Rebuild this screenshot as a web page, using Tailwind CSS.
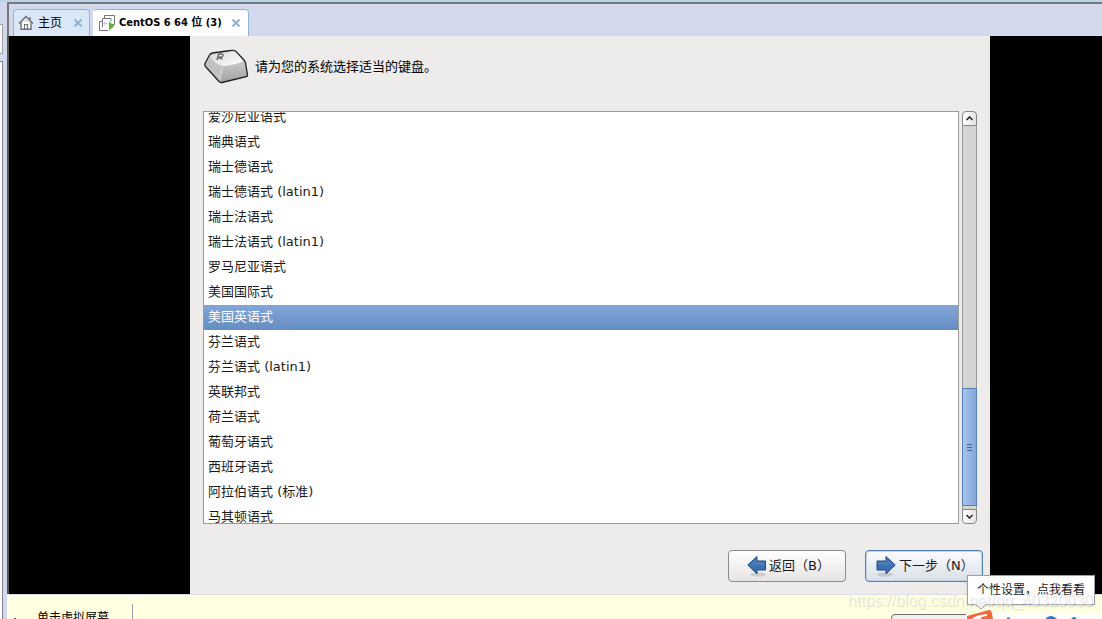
<!DOCTYPE html>
<html lang="zh-CN">
<head>
<meta charset="UTF-8">
<meta name="viewport" content="width=device-width, initial-scale=1.0">
<title>CentOS 6 64 位 (3)</title>
<script src="https://cdn.jsdelivr.net/npm/@tailwindcss/browser@4"></script>
</head>
<body class="relative flex h-screen overflow-hidden bg-[#d3d9ed] font-['DejaVu_Sans','Noto_Sans_CJK_SC',sans-serif] text-[13px] leading-5 text-[#1a1a1a]">

<!-- edge of the collapsed library pane -->
<aside class="flex w-[7px] shrink-0 flex-col border-t-2 border-[#b9d5ec] pt-[22px] pr-1">
  <div class="h-[30px] border border-l-0 border-[#a0a0a8] bg-[#f8f8f8]"></div>
  <div class="mt-[7px] flex-1 border border-b-0 border-l-0 border-[#82828c] bg-white"></div>
</aside>

<div class="flex min-w-0 flex-1 flex-col border-t-2 border-[#b9d5ec]">
  <!-- tab strip -->
  <nav class="flex h-[34px] shrink-0 items-end gap-[3px] border-t-2 border-l-2 border-[#787878] pl-1 font-['DejaVu_Sans_Condensed','Noto_Sans_CJK_SC',sans-serif] text-black">
    <div class="flex h-[27px] w-[77px] items-center rounded-t-sm border border-b-0 border-[#93b4d4] bg-[#dae7f6] pl-1">
      <svg class="size-4 shrink-0" viewBox="0 0 16 16" fill="#fff" stroke="#707070" stroke-width="1.4" aria-hidden="true">
        <path d="M3 7v7.300h10V7"/>
        <path d="M1 8.500 8 1.500l7 7" fill="none"/>
        <path d="M12 2v3" fill="none"/>
        <path d="M6.500 14V9.500h3V14" fill="none" stroke-width="1.200"/>
      </svg>
      <a href="#" class="ml-1 text-xs">主页</a>
      <button aria-label="关闭主页" class="ml-3">
        <svg class="size-2" viewBox="0 0 8 8" stroke="#8fb4d3" stroke-width="2"><path d="m.500.500 7 7m0-7-7 7"/></svg>
      </button>
    </div>
    <div class="flex h-[27px] w-[156px] items-center rounded-t-sm border border-b-0 border-[#93b4d4] border-l-white bg-white pl-[5px]">
      <svg class="size-4 shrink-0" viewBox="0 0 16 16" fill="none" stroke="#777" aria-hidden="true">
        <path d="M5.500 4V.500h10v9H13"/>
        <path d="M9 15.500H.500v-9h3"/>
        <path d="M3.500 12.500v-9h8.500v3" />
        <path d="M6 6.500v4M4.500 8.500H8" stroke="#a8c4e4"/>
        <path d="M10 6.500v9l5.500-4.500z" fill="#58b82c" stroke="none"/>
      </svg>
      <a href="#" class="ml-1 text-[11px] font-bold whitespace-nowrap">CentOS 6 64 位 (3)</a>
      <button aria-label="关闭 CentOS 6 64 位 (3)" class="ml-[10px]">
        <svg class="size-2" viewBox="0 0 8 8" stroke="#8fb4d3" stroke-width="2"><path d="m.500.500 7 7m0-7-7 7"/></svg>
      </button>
    </div>
  </nav>

  <!-- guest screen -->
  <div class="flex min-h-0 flex-1 border-l-2 border-[#555] bg-black pr-28 pl-[181px]">
    <main class="flex min-w-0 flex-1 flex-col bg-[#edeceb]">
      <header class="flex h-[75px] shrink-0 items-start px-[14px] pt-3 text-black">
        <svg class="h-[37px] w-[46px]" viewBox="0 0 46 37" aria-hidden="true">
          <defs>
            <linearGradient id="keyFront" x1="0" y1="0" x2="0" y2="1"><stop offset="0" stop-color="#dedede"/><stop offset="1" stop-color="#a2a2a2"/></linearGradient>
            <linearGradient id="keyTop" x1="0" y1="0" x2="1" y2="1"><stop offset="0" stop-color="#d8d8d8"/><stop offset="1" stop-color="#fff"/></linearGradient>
          </defs>
          <path d="M5.500 7Q6.500 5.500 8.500 5L27 2.500q3-.500 5 1l8 8.500q1 1 1.500 3l2 12-.5 1.500L18 34.500q-2 .500-3-1L1.500 18.500q-1-1-.5-3z" fill="url(#keyFront)" stroke="#222" stroke-width="1.300"/>
          <path d="M7 7.500 27 3.500q3-.500 5 1L39 13q-4 3-19 5Q11 17 6.500 9z" fill="url(#keyTop)"/>
          <path d="M6.500 9 2 17.500 15.500 32.500l2.500-14Q11 16 6.500 9z" fill="#c2c2c2"/>
          <path d="M18.500 18.500 16 32.500" stroke="#dcdcdc" fill="none"/>
          <path d="m13 12 1.500-5.500q4-1.500 4.500.5T14.500 9.500l4 1.500" fill="none" stroke="#666" stroke-width="1.500"/>
        </svg>
        <h1 id="prompt" class="mt-[9px] ml-[5px]">请为您的系统选择适当的键盘。</h1>
      </header>

      <div class="flex min-h-0 flex-1 gap-[3px] px-[13px]">
        <ul role="listbox" aria-labelledby="prompt" class="flex min-w-0 flex-1 flex-col justify-center overflow-hidden border border-[#9c9a98] bg-white *:h-[25px] *:shrink-0 *:px-1 *:leading-6">
          <li role="option">爱沙尼亚语式</li>
          <li role="option">瑞典语式</li>
          <li role="option">瑞士德语式</li>
          <li role="option">瑞士德语式 (latin1)</li>
          <li role="option">瑞士法语式</li>
          <li role="option">瑞士法语式 (latin1)</li>
          <li role="option">罗马尼亚语式</li>
          <li role="option">美国国际式</li>
          <li role="option" aria-selected="true" class="bg-linear-to-b from-[#83a6d8] to-[#648dc2] text-white">美国英语式</li>
          <li role="option">芬兰语式</li>
          <li role="option">芬兰语式 (latin1)</li>
          <li role="option">英联邦式</li>
          <li role="option">荷兰语式</li>
          <li role="option">葡萄牙语式</li>
          <li role="option">西班牙语式</li>
          <li role="option">阿拉伯语式 (标准)</li>
          <li role="option">马其顿语式</li>
        </ul>

        <div class="flex w-[15px] flex-col">
          <button aria-label="向上滚动" class="flex h-[15px] shrink-0 items-center justify-center rounded-t border border-[#888684] bg-linear-to-r from-white to-[#e4e3e1]">
            <svg class="h-[5px] w-[7px]" viewBox="0 0 7 5" fill="none" stroke="#222" stroke-width="1.500"><path d="m.500 4 3-3 3 3"/></svg>
          </button>
          <div class="flex flex-1 flex-col justify-end border-x border-[#9c9a98] bg-[#d5d4d2] pb-[3px]">
            <div class="-mx-px flex h-[118px] flex-col items-center justify-center gap-[2px] border border-[#5580b5] bg-linear-to-r from-[#a5c4eb] to-[#82a6d8] *:h-px *:w-[5px] *:bg-[#42669a]">
              <span></span><span></span><span></span>
            </div>
          </div>
          <button aria-label="向下滚动" class="flex h-[15px] shrink-0 items-center justify-center rounded-b border border-[#888684] bg-linear-to-r from-white to-[#e4e3e1]">
            <svg class="h-[5px] w-[7px]" viewBox="0 0 7 5" fill="none" stroke="#222" stroke-width="1.500"><path d="m.500 1 3 3 3-3"/></svg>
          </button>
        </div>
      </div>

      <footer class="flex h-[70px] shrink-0 items-start justify-end gap-[19px] pt-[26px] pr-[7px] *:flex *:h-8 *:w-[118px] *:items-center *:rounded *:border *:whitespace-nowrap">
        <button class="border-[#8e8c8a] bg-linear-to-b from-white to-[#e6e5e3] pl-[18px]">
          <svg class="h-[22px] w-5 shrink-0" viewBox="0 0 20 22" aria-hidden="true">
            <ellipse cx="11" cy="19.500" rx="8" ry="2" fill="#000" opacity=".12"/>
            <path d="M.800 10 10 1.500V6h8.500v9H10v4z" fill="#3d70b0" stroke="#1f4a87" stroke-linejoin="round"/>
            <path d="M2.500 10 9 4v3h8.500v3z" fill="#4a7cba"/>
          </svg>
          <span class="ml-[2px]">返回（B）</span>
        </button>
        <button class="border-[#5580b5] bg-linear-to-b from-[#fbfcfe] to-[#d9dfe8] pl-[10px] shadow-[inset_0_0_0_1px_#c3d4ea]">
          <svg class="h-[22px] w-5 shrink-0" viewBox="0 0 20 22" aria-hidden="true">
            <ellipse cx="9" cy="19.500" rx="8" ry="2" fill="#000" opacity=".12"/>
            <path d="M19.200 10 10 1.500V6H1v9h9v4z" fill="#3d70b0" stroke="#1f4a87" stroke-linejoin="round"/>
            <path d="M17.500 10 11 4v3H2v3z" fill="#4a7cba"/>
          </svg>
          <span class="ml-[3px]">下一步（N）</span>
        </button>
      </footer>
    </main>
  </div>

  <!-- hint bar, cut off by the window edge -->
  <div class="flex h-[25px] shrink-0 items-start overflow-hidden border-t border-[#dcdce6] bg-[#ffffe1] pl-[7px] text-xs text-black">
    <span class="mt-[23px] h-px w-[2px] bg-[#555]"></span>
    <p class="mt-[15px] ml-[21px] w-[95px] whitespace-nowrap">单击虚拟屏幕</p>
    <div class="mt-[9px] h-5 w-px bg-[#9a9aa6]"></div>
    <button aria-label="提示操作" class="mt-[19px] mr-2 ml-auto h-6 w-[203px] rounded-sm border border-[#707070] bg-[#f0f0f0]"></button>
  </div>
</div>

<!-- input method bar with its tooltip -->
<div class="absolute right-0 bottom-0 flex h-[5px] w-[136px] items-start overflow-hidden bg-white">
  <svg class="h-[5px] w-full" viewBox="0 0 136 5" fill="#2b7bc8" aria-hidden="true">
    <path d="M41 5V3.500h3V5z"/>
    <path d="M79 5q6-6 12 0z"/>
    <path d="M105 5q3-4 6 0z"/>
  </svg>
</div>
<svg class="absolute right-[108px] bottom-0 h-[9px] w-[27px]" viewBox="0 0 27 9" aria-hidden="true">
  <path d="M0 9V6L22 0q2 0 2.500 2L26 9z" fill="#f2683c"/>
  <path d="M5 9q3-4 15-5v2q-5 0-7 3z" fill="#fff"/>
</svg>
<div role="tooltip" class="absolute right-[7px] bottom-[14px] border border-[#9aa0aa] bg-white px-[9px] py-1 font-['Liberation_Sans','Noto_Sans_CJK_SC',sans-serif] text-xs leading-5 whitespace-nowrap shadow">
  个性设置，点我看看
  <svg class="absolute top-full left-[7px] h-[6px] w-3" viewBox="0 0 12 6" fill="#fff" stroke="#9aa0aa" aria-hidden="true"><path d="m.500 0 5.500 5 5.500-5"/></svg>
</div>

<p class="absolute right-[9px] bottom-[6px] font-['Liberation_Sans',sans-serif] text-base leading-6 text-white/50 [text-shadow:1px_1px_1px_#0002]">https://blog.csdn.net/qq_40320030</p>
</body>
</html>
